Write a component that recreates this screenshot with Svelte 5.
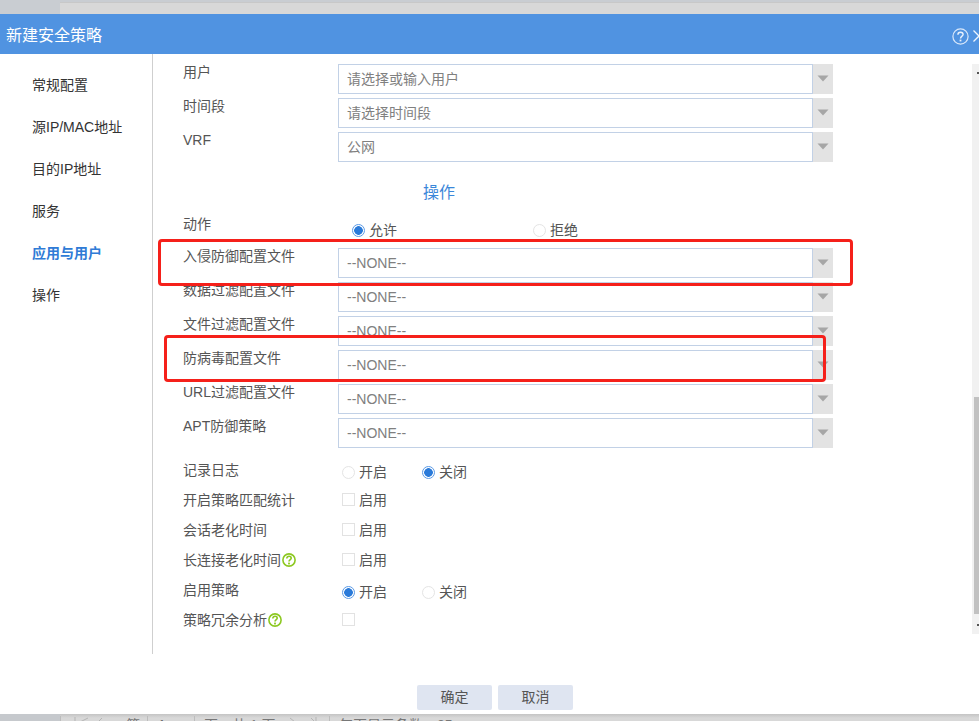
<script>
  const nav = [
    { name: '常规配置' },
    { name: '源IP/MAC地址' },
    { name: '目的IP地址' },
    { name: '服务' },
    { name: '应用与用户', active: true },
    { name: '操作' }
  ];
  const top = [
    { label: '用户', value: '请选择或输入用户' },
    { label: '时间段', value: '请选择时间段' },
    { label: 'VRF', value: '公网' }
  ];
  const profiles = ['入侵防御配置文件', '数据过滤配置文件', '文件过滤配置文件', '防病毒配置文件', 'URL过滤配置文件', 'APT防御策略'];
</script>

{#snippet arrow()}
  <span class="arrow"><svg width="12" height="7" viewBox="0 0 12 7"><path d="M0.5 0.5H11.5L6 6.5Z" fill="#a6a6a6" /></svg></span>
{/snippet}

{#snippet field(text)}
  <div class="control">
    <div class="input">{text}</div>
    {@render arrow()}
  </div>
{/snippet}

{#snippet radio(text, on)}
  <span class="opt"><span class="radio" class:on></span><span>{text}</span></span>
{/snippet}

{#snippet help()}
  <svg class="qmark" width="14" height="14" viewBox="0 0 14 14">
    <circle cx="7" cy="7" r="6.1" fill="none" stroke="#8cc821" stroke-width="1.6" />
    <path d="M4.8 5.4C4.8 4.1 5.9 3.3 7 3.3S9.2 4.1 9.2 5.3C9.2 6.6 7 6.8 7 8.6" fill="none" stroke="#8cc821" stroke-width="1.6" />
    <rect x="6.1" y="9.6" width="1.8" height="1.8" fill="#8cc821" />
  </svg>
{/snippet}

<div class="page">
  <div class="backdrop-top"><div class="tab"></div></div>

  <div class="dialog">
    <header>
      <span class="title">新建安全策略</span>
      <span class="header-icons">
        <svg width="17" height="17" viewBox="0 0 17 17">
          <circle cx="8.5" cy="8.5" r="7.6" fill="none" stroke="#d9e8fa" stroke-width="1.2" />
          <path d="M5.9 6.7C5.9 5.1 7.1 4.2 8.5 4.2S11.1 5.1 11.1 6.5C11.1 8.1 8.5 8.2 8.5 10.5" fill="none" stroke="#e8f1fc" stroke-width="1.4" />
          <rect x="7.6" y="11.6" width="1.8" height="1.8" fill="#e8f1fc" />
        </svg>
        <svg class="close" width="12" height="12" viewBox="0 0 12 12"><path d="M0.5 0.5L11.5 11.5M11.5 0.5L0.5 11.5" stroke="#eef5fd" stroke-width="1.3" fill="none" /></svg>
      </span>
    </header>

    <div class="body">
      <nav>
        {#each nav as item}
          <div class="nav-item" class:active={item.active}>{item.name}</div>
        {/each}
      </nav>

      <main>
        {#each top as row}
          <div class="row">
            <div class="label">{row.label}</div>
            {@render field(row.value)}
          </div>
        {/each}

        <div class="section">操作</div>

        <div class="action-row">
          <div class="label action-label">动作</div>
          <div class="action-opts">
            {@render radio('允许', true)}
            {@render radio('拒绝', false)}
          </div>
        </div>

        {#each profiles as name}
          <div class="row">
            <div class="label">{name}</div>
            {@render field('--NONE--')}
          </div>
        {/each}

        <div class="options">
          <div class="opt-row">
            <div class="label2">记录日志</div>
            <div class="opts low">{@render radio('开启', false)}{@render radio('关闭', true)}</div>
          </div>
          <div class="opt-row">
            <div class="label2">开启策略匹配统计</div>
            <div class="opts"><span class="check"></span><span>启用</span></div>
          </div>
          <div class="opt-row">
            <div class="label2">会话老化时间</div>
            <div class="opts"><span class="check"></span><span>启用</span></div>
          </div>
          <div class="opt-row">
            <div class="label2">长连接老化时间{@render help()}</div>
            <div class="opts"><span class="check"></span><span>启用</span></div>
          </div>
          <div class="opt-row">
            <div class="label2">启用策略</div>
            <div class="opts low">{@render radio('开启', true)}{@render radio('关闭', false)}</div>
          </div>
          <div class="opt-row">
            <div class="label2">策略冗余分析{@render help()}</div>
            <div class="opts"><span class="check"></span></div>
          </div>
        </div>
      </main>

      <div class="scrollbar">
        <span class="sb-up"></span>
        <div class="thumb"></div>
        <span class="sb-down"></span>
      </div>
    </div>

    <footer>
      <button>确定</button>
      <button>取消</button>
    </footer>
  </div>

  <div class="backdrop-bottom">
    <div class="pager">
      <span class="pg-icons">
        <svg width="36" height="10" viewBox="0 0 36 10"><path d="M1 0V10M14 1L6 5H18M22 5H35M28 1L24 5" stroke="#b5b5b5" fill="none" /></svg>
      </span>
      <span class="pg-di">第</span>
      <span class="pg-input">1</span>
      <span class="pg-of">页，共 1 页</span>
      <span class="pg-icons2">
        <svg width="36" height="10" viewBox="0 0 36 10"><path d="M1 5H14M9 1L14 5M22 5H34M30 1L34 5M35 0V10" stroke="#b5b5b5" fill="none" /></svg>
      </span>
      <span class="pg-size">每页显示条数：25</span>
    </div>
  </div>

  <div class="mark mark-a"></div>
  <div class="mark mark-b"></div>
</div>

<style>
  :global(body) {
    margin: 0;
    background: #fff;
  }
  .page {
    position: relative;
    width: 979px;
    height: 721px;
    overflow: hidden;
    display: flex;
    flex-direction: column;
    font-family: "Liberation Sans", "Noto Sans CJK SC", sans-serif;
    font-size: 14px;
    color: #555;
  }
  .backdrop-top {
    height: 14px;
    flex: none;
    background: #c9cdd2;
    padding: 2px 0 0 60px;
    box-sizing: border-box;
  }
  .tab {
    height: 12px;
    background: #d8d8d8;
    border-top: 1px solid #c8c8c8;
    box-sizing: border-box;
  }
  .dialog {
    flex: none;
    height: 700px;
    display: flex;
    flex-direction: column;
    background: #fff;
  }
  header {
    flex: none;
    height: 40px;
    background: #5093e1;
    display: flex;
    align-items: center;
    justify-content: space-between;
    padding-left: 6px;
    box-sizing: border-box;
    overflow: hidden;
  }
  .title {
    font-size: 16px;
    color: #fff;
    margin-bottom: 1px;
  }
  .header-icons {
    display: flex;
    align-items: center;
    gap: 4px;
    margin: 4px -6px 0 0;
    flex: none;
  }
  .header-icons svg {
    display: block;
  }
  .body {
    flex: none;
    height: 600px;
    display: flex;
  }
  nav {
    flex: none;
    width: 152px;
    height: 590px;
    border-right: 1px solid #cfcfcf;
    padding-top: 10px;
  }
  .nav-item {
    height: 42px;
    line-height: 42px;
    padding-left: 32px;
    color: #333;
  }
  .nav-item.active {
    color: #2f7bd6;
    font-weight: 700;
  }
  main {
    flex: 1;
    min-width: 0;
    padding: 10px 0 0 30px;
  }
  .row {
    display: flex;
    height: 30px;
    margin-bottom: 4px;
  }
  .label {
    flex: none;
    width: 155px;
    line-height: 14px;
    padding-top: 1px;
    white-space: nowrap;
  }
  .action-label {
    padding-top: 0;
  }
  .control {
    display: flex;
    flex: none;
    width: 495px;
    height: 30px;
  }
  .input {
    flex: none;
    width: 475px;
    height: 30px;
    box-sizing: border-box;
    border: 1px solid #c2d1e6;
    padding-left: 8px;
    line-height: 29px;
    color: #808080;
    background: #fff;
  }
  .arrow {
    flex: none;
    width: 20px;
    height: 30px;
    background: #e3e3e3;
    display: flex;
    align-items: center;
    justify-content: center;
  }
  .arrow svg {
    display: block;
    margin-top: -1px;
  }
  .section {
    height: 51px;
    box-sizing: border-box;
    padding-top: 17px;
    line-height: 20px;
    font-size: 16px;
    color: #3b87d9;
    width: 512px;
    text-align: center;
  }
  .action-row {
    display: flex;
    height: 31px;
  }
  .action-opts {
    display: flex;
    padding: 6px 0 0 14px;
  }
  .action-opts .opt {
    width: 181px;
  }
  .opt {
    display: flex;
    align-items: center;
    gap: 4px;
    width: 80px;
    height: 14px;
    line-height: 14px;
    flex: none;
    color: #555;
  }
  .radio {
    flex: none;
    width: 13px;
    height: 13px;
    box-sizing: border-box;
    border-radius: 50%;
    border: 1px solid #e4e4e4;
    background: #fff;
  }
  .radio.on {
    border: 1px solid #5b9ae6;
    background: radial-gradient(circle, #2a7ad9 0 4px, #fff 4.6px);
  }
  .options {
    padding-top: 2px;
  }
  .opt-row {
    display: flex;
    height: 30px;
    align-items: center;
  }
  .label2 {
    flex: none;
    width: 159px;
    display: flex;
    align-items: center;
    white-space: nowrap;
  }
  .qmark {
    display: block;
    margin: 2px 0 0 1px;
    flex: none;
  }
  .opts {
    display: flex;
    align-items: center;
    gap: 4px;
  }
  .opts.low {
    gap: 0;
    padding-top: 6px;
  }
  .check {
    flex: none;
    width: 13px;
    height: 13px;
    box-sizing: border-box;
    border: 1px solid #e2e2e2;
    background: #fff;
  }
  .scrollbar {
    flex: none;
    position: relative;
    width: 7px;
    height: 570px;
    margin-top: 10px;
    background: #f1f1f1;
    padding: 333px 0 0 2px;
    box-sizing: border-box;
  }
  .thumb {
    width: 5px;
    height: 217px;
    background: #c1c1c1;
  }
  .sb-up,
  .sb-down {
    position: absolute;
    right: 0;
    width: 2px;
    height: 2px;
    background: #555;
  }
  .sb-up {
    top: 8px;
  }
  .sb-down {
    bottom: 8px;
  }
  footer {
    flex: none;
    height: 60px;
    display: flex;
    justify-content: flex-start;
    gap: 6px;
    padding: 31px 0 0 417px;
    box-sizing: border-box;
  }
  button {
    flex: none;
    width: 75px;
    height: 25px;
    border: 0;
    border-radius: 2px;
    background: #dfe5f1;
    font: inherit;
    line-height: 25px;
    color: #555;
    padding: 0;
  }
  .backdrop-bottom {
    flex: 1;
    min-height: 0;
    overflow: hidden;
    background: linear-gradient(#c4c4c4, #d8d8d8 4px);
  }
  .pager {
    display: flex;
    height: 30px;
    padding: 2px 0 0 60px;
    font-size: 14px;
    color: #777;
    line-height: 18px;
    background: linear-gradient(90deg, #c6c9cd 0 60px, transparent 60px);
    box-sizing: border-box;
  }
  .pager span {
    flex: none;
    display: block;
  }
  .pg-icons {
    width: 66px;
    padding: 1px 0 0 13px;
    box-sizing: border-box;
    border-left: 1px solid #bdbdbd;
  }
  .pg-di {
    width: 21px;
  }
  .pg-input {
    width: 48px;
    padding-left: 10px;
    box-sizing: border-box;
    border-left: 1px solid #bdbdbd;
    border-right: 1px solid #bdbdbd;
    color: #666;
  }
  .pg-of {
    width: 86px;
    padding-left: 9px;
    box-sizing: border-box;
  }
  .pg-icons2 {
    width: 48px;
    padding-top: 1px;
  }
  .pg-size {
    border-left: 1px solid #bdbdbd;
    padding-left: 9px;
  }
  .pager svg {
    display: block;
  }
  .mark {
    position: absolute;
    box-sizing: border-box;
    border: 3px solid #f5201a;
    border-radius: 4px;
    pointer-events: none;
  }
  .mark-a {
    left: 158px;
    top: 239px;
    width: 695px;
    height: 47px;
  }
  .mark-b {
    left: 164px;
    top: 335px;
    width: 662px;
    height: 47px;
  }
</style>
